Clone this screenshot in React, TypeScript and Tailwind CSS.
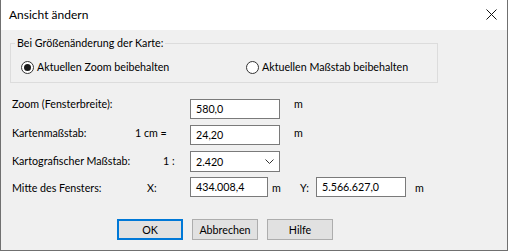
function Field({ w, children }: { w: string; children: React.ReactNode }) {
  return (
    <div className={`${w} flex h-[20px] items-center border border-[#7a7a7a] bg-white pl-[5px]`}>
      {children}
    </div>
  );
}

function Radio({ checked }: { checked?: boolean }) {
  return (
    <span className="flex h-[13px] w-[13px] shrink-0 items-center justify-center rounded-full border border-[#333333] bg-white">
      {checked && <span className="h-[7px] w-[7px] rounded-full bg-[#1a1a1a]" />}
    </span>
  );
}

function Button({ children, primary }: { children: React.ReactNode; primary?: boolean }) {
  return (
    <button
      type="button"
      className={`flex h-[21px] w-[66px] items-center justify-center bg-[#e1e1e1] ${
        primary ? "border-2 border-[#0078d7]" : "border border-[#adadad]"
      }`}
    >
      {children}
    </button>
  );
}

export default function App() {
  return (
    <div className="h-[251px] w-[508px] border-x border-b border-[#707070] bg-[#f0f0f0] font-['Lato',sans-serif] leading-[14px] text-black">
      <div className="flex h-[30px] items-center justify-between bg-white pl-[8px] pr-[10px] text-[12px]">
        <span>Ansicht ändern</span>
        <svg width="11" height="11" viewBox="0 0 11 11" className="mb-[1px]">
          <path d="M0.5 0.5 L10.5 10.5 M10.5 0.5 L0.5 10.5" stroke="#111" strokeWidth="1" fill="none" />
        </svg>
      </div>

      <div className="text-[10.7px]">
        <fieldset className="ml-[9px] mt-[6px] h-[47px] w-[428px] border border-[#dcdcdc] px-0">
          <legend className="ml-[4px] px-[2px]">Bei Größenänderung der Karte:</legend>
          <div className="flex items-center pl-[10px] pt-[10px]">
            <label className="flex w-[225px] items-center gap-[3px]">
              <Radio checked />
              <span>Aktuellen Zoom beibehalten</span>
            </label>
            <label className="flex items-center gap-[3px]">
              <Radio />
              <span>Aktuellen Maßstab beibehalten</span>
            </label>
          </div>
        </fieldset>

        <div className="mt-[16px] flex flex-col gap-[6px] pl-[11px]">
          <div className="flex h-[20px] items-start">
            <span className="-mt-[2px] w-[178px]">Zoom (Fensterbreite):</span>
            <Field w="w-[90px]">580,0</Field>
            <span className="-mt-[2px] ml-[14px]">m</span>
          </div>
          <div className="flex h-[20px] items-start">
            <span className="mt-[1px] w-[123px]">Kartenmaßstab:</span>
            <span className="mt-[1px] w-[55px]">1 cm =</span>
            <Field w="w-[90px]">24,20</Field>
            <span className="mt-[1px] ml-[14px]">m</span>
          </div>
          <div className="flex h-[20px] items-start">
            <span className="mt-[3px] w-[151px]">Kartografischer Maßstab:</span>
            <span className="mt-[3px] w-[27px]">1 :</span>
            <div className="flex h-[21px] w-[90px] items-center justify-between border border-[#7a7a7a] bg-white pl-[5px] pr-[5px]">
              <span>2.420</span>
              <svg width="9" height="5" viewBox="0 0 9 5">
                <path d="M0.5 0.5 L4.5 4.5 L8.5 0.5" stroke="#333" strokeWidth="1" fill="none" />
              </svg>
            </div>
          </div>
          <div className="flex h-[20px] items-start">
            <span className="mt-[4px] w-[135px]">Mitte des Fensters:</span>
            <span className="mt-[4px] w-[43px]">X:</span>
            <Field w="w-[78px]">434.008,4</Field>
            <span className="mt-[4px] ml-[4px] w-[28px]">m</span>
            <span className="mt-[4px] w-[16px]">Y:</span>
            <Field w="w-[90px]">5.566.627,0</Field>
            <span className="mt-[4px] ml-[9px]">m</span>
          </div>
        </div>

        <div className="ml-[116px] mt-[22px] flex gap-[9px]">
          <Button primary>OK</Button>
          <Button>Abbrechen</Button>
          <Button>Hilfe</Button>
        </div>
      </div>
    </div>
  );
}
